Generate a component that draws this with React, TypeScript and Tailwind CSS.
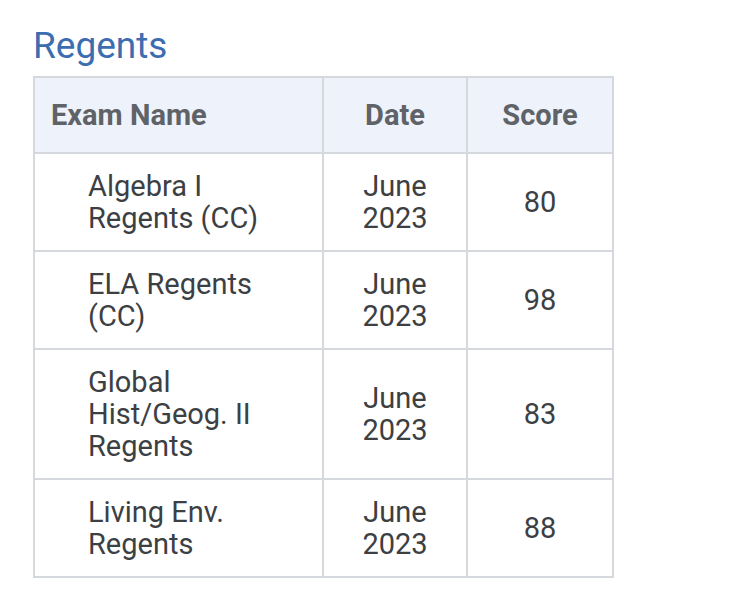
import React from 'react';

const rows = [
  { name: 'Algebra I Regents (CC)', date: 'June 2023', score: '80' },
  { name: 'ELA Regents (CC)', date: 'June 2023', score: '98' },
  { name: 'Global Hist/Geog. II Regents', date: 'June 2023', score: '83' },
  { name: 'Living Env. Regents', date: 'June 2023', score: '88' },
];

export default function App() {
  return (
    <div className="min-h-screen bg-white pt-[24px] pl-[33px]" style={{ fontFamily: 'Roboto, sans-serif' }}>
      <h2 className="text-[37px] leading-[44px] text-[#3b6db0] mb-[8px]">Regents</h2>
      <table className="w-[579px] border-collapse table-fixed text-[29px] leading-[32px]">
        <colgroup>
          <col className="w-[289px]" />
          <col className="w-[144px]" />
          <col className="w-[146px]" />
        </colgroup>
        <thead>
          <tr className="bg-[#eef2fa] text-[#5f6368] font-bold">
            <th className="border-2 border-[#d5d8dc] text-left pl-[16px] py-[21px] font-bold">Exam Name</th>
            <th className="border-2 border-[#d5d8dc] text-center py-[21px] font-bold">Date</th>
            <th className="border-2 border-[#d5d8dc] text-center py-[21px] font-bold">Score</th>
          </tr>
        </thead>
        <tbody className="text-[#3c4043]">
          {rows.map((r) => (
            <tr key={r.name}>
              <td className="border-2 border-[#d5d8dc] pl-[53px] pr-[40px] py-[16px] align-middle">{r.name}</td>
              <td className="border-2 border-[#d5d8dc] text-center px-[20px] py-[16px] align-middle">{r.date}</td>
              <td className="border-2 border-[#d5d8dc] text-center py-[16px] align-middle">{r.score}</td>
            </tr>
          ))}
        </tbody>
      </table>
    </div>
  );
}
